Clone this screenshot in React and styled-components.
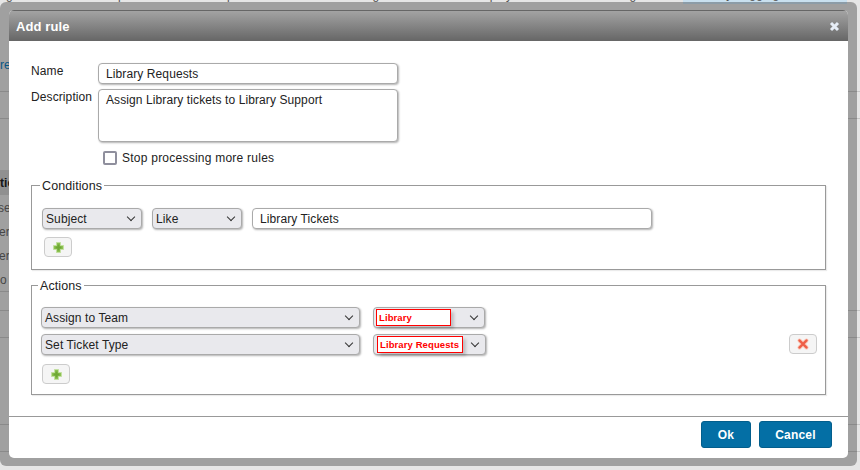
import React from "react";
import styled, { createGlobalStyle } from "styled-components";

const GlobalStyle = createGlobalStyle`
  html, body {
    margin: 0;
    padding: 0;
    background: #e6e6e6;
    overflow: hidden;
  }
  body {
    font-family: "Liberation Sans", Arial, sans-serif;
    font-size: 12px;
    letter-spacing: 0.1px;
    color: #222;
  }
`;

function Plus() {
  return (
    <svg width="13" height="13" viewBox="0 0 13 13">
      <path d="M4.500 1.500h4v3h3v4h-3v3h-4v-3h-3v-4h3z" fill="#8cc152" stroke="#c3e0a0" strokeWidth="1" strokeLinejoin="round" />
      <path d="M5.500 3.500h2v2h2v2h-2v2h-2v-2h-2v-2h2z" fill="#6fa835" />
    </svg>
  );
}

function Cross() {
  return (
    <svg width="14" height="14" viewBox="0 0 14 14">
      <path d="M3.500 3.500l7 7M10.500 3.500l-7 7" stroke="#f9c4b4" strokeWidth="4" strokeLinecap="round" />
      <path d="M3.500 3.500l7 7M10.500 3.500l-7 7" stroke="#ee5f48" strokeWidth="2.400" strokeLinecap="round" />
    </svg>
  );
}

export default function App() {
  return (
    <>
      <GlobalStyle />
      <Page>
        <Backdrop>
          <Band $height={92}>
            <TopMenu>
              <MenuItems>
                <span>g</span>
                <span>Help</span>
                <span>Reports</span>
                <span>Settings</span>
                <span>Display</span>
                <span>Manage</span>
              </MenuItems>
              <MenuActive>Library Logging</MenuActive>
            </TopMenu>
            <LinkText>re</LinkText>
          </Band>
          <Band $height={27} />
          <Band $height={51} $plain />
          <Band $height={25} $dark $plain><BoldCut>tic</BoldCut></Band>
          <Band $height={24} $plain><CutText $shift={-2}>se</CutText></Band>
          <Band $height={24} $plain><CutText $shift={-1}>er</CutText></Band>
          <Band $height={24} $plain><CutText $shift={-1}>er</CutText></Band>
          <Band $height={24} $plain><CutText>o</CutText></Band>
          <Band $height={20}><ShortRule /></Band>
          <Band $height={27} />
          <Band $height={87} />
          <Band $height={27} />
        </Backdrop>
        <Frame>
          <Modal>
            <TitleBar>
              <Title>Add rule</Title>
              <CloseIcon>
                <svg width="11" height="11" viewBox="0 0 11 11">
                  <path d="M2 2l7 7M9 2l-7 7" stroke="#e6edf6" strokeWidth="3" />
                </svg>
              </CloseIcon>
            </TitleBar>
            <Body>
              <FieldGrid>
                <FieldLabel>Name</FieldLabel>
                <TextInput $width={300} readOnly value="Library Requests" />
                <FieldLabel>Description</FieldLabel>
                <TextArea readOnly value="Assign Library tickets to Library Support" />
              </FieldGrid>
              <CheckRow>
                <CheckBox />
                <span>Stop processing more rules</span>
              </CheckRow>
              <ConditionsBox>
                <Legend $left={8}>Conditions</Legend>
                <Row>
                  <Select $width={100}>Subject</Select>
                  <Select $width={90}>Like</Select>
                  <TextInput $width={400} readOnly value="Library Tickets" />
                </Row>
                <IconButton $left={2}><Plus /></IconButton>
              </ConditionsBox>
              <ActionsBox>
                <Legend $left={6}>Actions</Legend>
                <ActionRow>
                  <Select $width={319}>Assign to Team</Select>
                  <Select $width={112} $flagged><Flagged $width={75}>Library</Flagged></Select>
                </ActionRow>
                <ActionRow>
                  <Select $width={319}>Set Ticket Type</Select>
                  <Select $width={113} $flagged><Flagged $width={86} $left={1}>Library Requests</Flagged></Select>
                  <RemoveSlot><IconButton><Cross /></IconButton></RemoveSlot>
                </ActionRow>
                <IconButton $left={1} $top={9}><Plus /></IconButton>
              </ActionsBox>
            </Body>
            <Footer>
              <PrimaryButton $width={50}>Ok</PrimaryButton>
              <PrimaryButton $width={73}>Cancel</PrimaryButton>
            </Footer>
          </Modal>
        </Frame>
      </Page>
    </>
  );
}

const Page = styled.div`
  position: relative;
  width: 860px;
  height: 470px;
  overflow: hidden;
`;

const Backdrop = styled.div`
  display: flex;
  flex-direction: column;
  height: 470px;
  overflow: hidden;
  color: #666;
  font-size: 12px;
`;

const Band = styled.div`
  flex: none;
  box-sizing: border-box;
  height: ${(p) => p.$height}px;
  border-bottom: ${(p) => (p.$plain ? "0" : "1px solid #c6c6c6")};
  background: ${(p) => (p.$dark ? "linear-gradient(90deg, #cfcfcf 9px, transparent 9px)" : "transparent")};
  line-height: 26px;
`;

const ShortRule = styled.div`
  width: 9px;
  height: 1px;
  background: #c6c6c6;
`;

const CutText = styled.div`
  margin-left: ${(p) => p.$shift || 0}px;
`;

const BoldCut = styled.div`
  color: #222;
  font-weight: bold;
`;

const TopMenu = styled.div`
  display: flex;
  align-items: flex-end;
  height: 4px;
  overflow: hidden;
  color: #555;
  line-height: 13px;
`;

const MenuItems = styled.div`
  flex: 1;
  display: flex;
  justify-content: space-between;
  align-items: flex-end;
  height: 14px;
  margin: 0 40px 2px 6px;
`;

const MenuActive = styled.span`
  flex: none;
  box-sizing: border-box;
  width: 164px;
  height: 16px;
  margin-right: 13px;
  padding-left: 12px;
  background: #c9e0ef;
`;

const LinkText = styled.div`
  margin-top: 54px;
  color: #0b7bbd;
  line-height: 14px;
`;

const Frame = styled.div`
  position: absolute;
  top: 2px;
  left: 0;
  box-sizing: border-box;
  width: 857px;
  height: 464px;
  padding: 8px 9px 8px 9px;
  background: rgba(0, 0, 0, 0.3);
  border-radius: 6px;
`;

const Modal = styled.div`
  height: 448px;
  display: flex;
  flex-direction: column;
  background: #fff;
  border-radius: 5px;
  overflow: hidden;
`;

const TitleBar = styled.div`
  flex: none;
  height: 31px;
  display: flex;
  align-items: center;
  justify-content: space-between;
  padding: 0 8px 0 7px;
  box-sizing: border-box;
  border-top: 1px solid #666;
  background: linear-gradient(#a3a3a3, #666);
`;

const Title = styled.span`
  color: #fff;
  font-size: 13px;
  font-weight: bold;
`;

const CloseIcon = styled.span`
  display: flex;
`;

const Body = styled.div`
  flex: 1;
  padding: 22px 22px 0 22px;
`;

const FieldGrid = styled.div`
  display: grid;
  grid-template-columns: 67px 300px;
  row-gap: 5px;
`;

const FieldLabel = styled.label`
  padding-top: 1px;
`;

const TextInput = styled.input`
  box-sizing: border-box;
  width: ${(p) => p.$width}px;
  height: 21px;
  padding: 0 7px;
  border: 1px solid #aaa;
  border-radius: 4px;
  box-shadow: 1px 1px 2px rgba(0, 0, 0, 0.3);
  font: 12px "Liberation Sans", Arial, sans-serif;
  letter-spacing: 0.1px;
  color: #222;
  outline: none;
`;

const TextArea = styled.textarea`
  box-sizing: border-box;
  display: block;
  width: 300px;
  height: 53px;
  padding: 3px 7px;
  border: 1px solid #aaa;
  border-radius: 4px;
  box-shadow: 1px 1px 2px rgba(0, 0, 0, 0.3);
  font: 12px "Liberation Sans", Arial, sans-serif;
  letter-spacing: 0.1px;
  color: #222;
  resize: none;
  outline: none;
`;

const CheckRow = styled.div`
  display: flex;
  align-items: center;
  gap: 5px;
  margin: 9px 0 0 72px;
  height: 14px;
  letter-spacing: 0.24px;
`;

const CheckBox = styled.span`
  box-sizing: border-box;
  width: 14px;
  height: 14px;
  border: 2px solid #8f8f9d;
  border-radius: 2px;
`;

const Fieldset = styled.div`
  position: relative;
  box-sizing: border-box;
  width: 795px;
  border: 1px solid #999;
  box-shadow: 1px 1px 1px rgba(0, 0, 0, 0.08);
`;

const ConditionsBox = styled(Fieldset)`
  height: 85px;
  margin: 20px 0 15px;
  padding: 22px 10px 0;
`;

const ActionsBox = styled(Fieldset)`
  height: 110px;
  padding: 21px 8px 0 9px;
`;

const Legend = styled.span`
  position: absolute;
  top: -8px;
  left: ${(p) => p.$left}px;
  padding: 0 2px;
  background: #fff;
  font-size: 12.500px;
  line-height: 16px;
`;

const Row = styled.div`
  display: flex;
  gap: 10px;
  margin-bottom: 8px;
`;

const ActionRow = styled.div`
  display: flex;
  gap: 13px;
  margin-bottom: 6px;
`;

const Select = styled.div`
  position: relative;
  box-sizing: border-box;
  width: ${(p) => p.$width}px;
  height: 21px;
  padding-left: ${(p) => (p.$flagged ? "2px" : "3px")};
  padding-top: 1px;
  line-height: 19px;
  background: #e9e9ed;
  border: 1px solid #aaa;
  border-radius: 4px;
  box-shadow: 1px 1px 2px rgba(0, 0, 0, 0.3);
  &::after {
    content: "";
    position: absolute;
    right: 7px;
    top: 5px;
    width: 5px;
    height: 5px;
    border-right: 1.500px solid #333;
    border-bottom: 1.500px solid #333;
    transform: rotate(45deg);
  }
`;

const Flagged = styled.span`
  display: block;
  box-sizing: border-box;
  width: ${(p) => p.$width}px;
  height: 17px;
  margin-left: ${(p) => p.$left || 0}px;
  padding-left: 2px;
  line-height: 15px;
  border: 1px solid #f00;
  background: #fff;
  box-shadow: 3px 3px 3px rgba(0, 0, 0, 0.18);
  color: #f00;
  font-size: 9.500px;
  font-weight: bold;
`;

const RemoveSlot = styled.div`
  margin-left: auto;
`;

const IconButton = styled.button`
  display: flex;
  align-items: center;
  justify-content: center;
  box-sizing: border-box;
  width: 28px;
  height: 20px;
  margin: ${(p) => p.$top || 0}px 0 0 ${(p) => p.$left || 0}px;
  padding: 0;
  background: #f5f5f5;
  border: 1px solid #ccc;
  border-radius: 4px;
`;

const Footer = styled.div`
  flex: none;
  height: 42px;
  display: flex;
  justify-content: flex-end;
  gap: 8px;
  padding: 4px 16px 0 0;
  box-sizing: border-box;
  border-top: 1px solid #999;
`;

const PrimaryButton = styled.button`
  box-sizing: border-box;
  width: ${(p) => p.$width}px;
  height: 27px;
  padding: 0;
  background: #046fa5;
  border: 1px solid #035e8c;
  border-radius: 3px;
  color: #fff;
  font: bold 12px "Liberation Sans", Arial, sans-serif;
  letter-spacing: 0.2px;
`;
